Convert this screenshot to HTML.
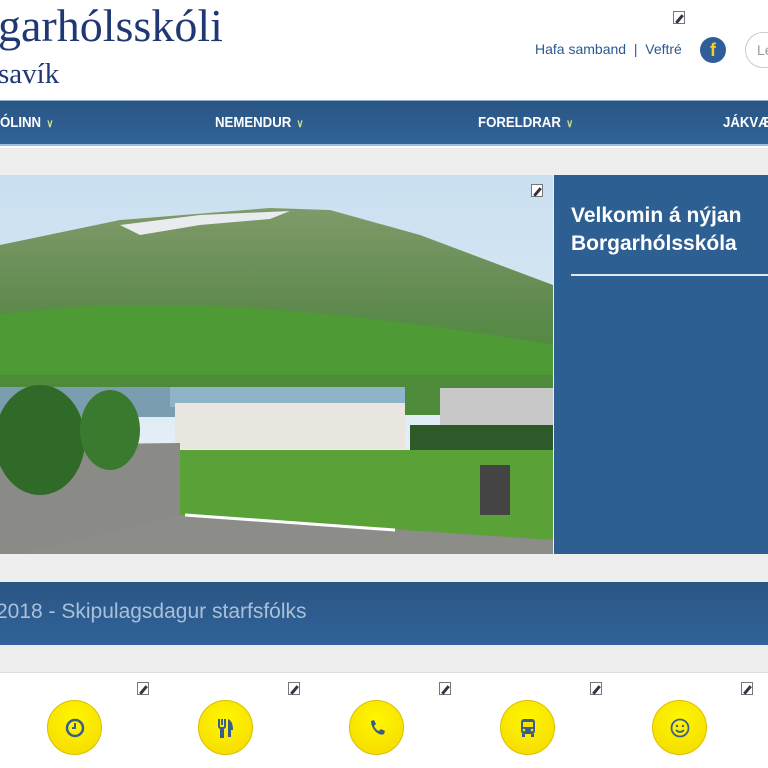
<!DOCTYPE html>
<html><head><meta charset="utf-8"><style>
*{margin:0;padding:0;box-sizing:border-box}
body{width:768px;height:768px;overflow:hidden;background:#fff;font-family:"Liberation Sans",sans-serif;position:relative}
.a{position:absolute}
.nav{top:100px;left:0;width:768px;height:46px;background:linear-gradient(#2a5583,#31639a);border-top:1px solid #8fb0d0;border-bottom:2px solid #9cc0e0}
.nav span{position:absolute;top:13px;color:#fff;font-weight:bold;font-size:15px;transform:scaleX(.88);transform-origin:left}
.nav i{font-style:normal;color:#c8e08a;font-size:11px;margin-left:6px}
.ed{width:12px;height:13px;border:1px solid #777;background:#fff}
.ed:after{content:"";position:absolute;left:4px;top:2px;width:3px;height:10px;background:#334;transform:rotate(40deg)}
.c{width:55px;height:55px;border-radius:50%;background:radial-gradient(circle at 50% 35%,#fff700,#f4d800);border:1px solid #d8c000;top:700px}
.c svg{position:absolute;left:17px;top:17px}
</style></head><body>
<div class="a" style="left:-2px;top:-1px;font-family:'Liberation Serif',serif;font-size:46px;color:#1f3874">garhólsskóli</div>
<div class="a" style="left:-2px;top:58px;font-family:'Liberation Serif',serif;font-size:29px;color:#1f3874">savík</div>
<div class="a ed" style="left:673px;top:11px"></div>
<div class="a" style="left:535px;top:41px;font-size:14px;color:#2a5a8e">Hafa samband &nbsp;| &nbsp;Veftré</div>
<div class="a" style="left:700px;top:37px;width:26px;height:26px;border-radius:50%;background:#2f5d99;color:#f0d020;font-weight:bold;font-size:18px;text-align:center;line-height:27px">f</div>
<div class="a" style="left:745px;top:32px;width:60px;height:36px;border-radius:18px;border:1px solid #ccc;color:#999;font-size:14px;padding:9px 0 0 11px">Le</div>
<div class="a nav"><span style="left:0">ÓLINN<i>∨</i></span><span style="left:215px">NEMENDUR<i>∨</i></span><span style="left:478px">FORELDRAR<i>∨</i></span><span style="left:723px">JÁKVÆ</span></div>
<div class="a" style="top:148px;left:0;width:768px;height:524px;background:#eeeeee"></div>
<svg class="a" style="left:0;top:175px" width="553" height="379" viewBox="0 0 553 379">
<defs><linearGradient id="s" x1="0" y1="0" x2="0" y2="1"><stop offset="0" stop-color="#c9dff0"/><stop offset="1" stop-color="#eef4f8"/></linearGradient>
<linearGradient id="m" x1="0" y1="0" x2="0" y2="1"><stop offset="0" stop-color="#7f9a6a"/><stop offset=".5" stop-color="#5f8a4e"/><stop offset="1" stop-color="#3f8a30"/></linearGradient></defs>
<rect width="553" height="379" fill="url(#s)"/>
<path d="M0 70 L120 45 L270 33 L330 35 L420 60 L553 110 L553 230 L0 230Z" fill="url(#m)"/>
<path d="M120 50 L200 40 L290 36 L270 44 L200 50 L140 60Z" fill="#e8ecee"/>
<path d="M0 140 Q200 110 553 170 L553 230 L0 230Z" fill="#4e9a35"/>
<rect x="0" y="200" width="553" height="40" fill="#4d8a3a"/>
<rect x="0" y="212" width="180" height="30" fill="#7a9eb0"/>
<rect x="170" y="212" width="235" height="20" fill="#8fb4c8"/>
<rect x="175" y="228" width="230" height="46" fill="#e8e6de"/>
<rect x="440" y="213" width="113" height="40" fill="#c8c8c8"/>
<rect x="410" y="250" width="143" height="25" fill="#2e5a2a"/>
<path d="M0 270 L180 268 L180 379 L0 379Z" fill="#8a8a86"/>
<path d="M180 275 L553 275 L553 379 L180 379Z" fill="#5aa238"/>
<path d="M180 340 L553 365 L553 379 L20 379Z" fill="#8c8c88"/>
<ellipse cx="40" cy="265" rx="45" ry="55" fill="#2f6a28"/>
<ellipse cx="110" cy="255" rx="30" ry="40" fill="#3a7a2e"/>
<path d="M185 340 L395 355" stroke="#fff" stroke-width="3"/>
<rect x="480" y="290" width="30" height="50" fill="#444"/>
</svg>
<div class="a ed" style="left:531px;top:184px"></div>
<div class="a" style="left:554px;top:175px;width:214px;height:379px;background:#2e5f92"></div>
<div class="a" style="left:571px;top:202px;color:#fff;font-weight:bold;font-size:21px;line-height:28px;white-space:nowrap">Velkomin á nýjan<br>Borgarhólsskóla</div>
<div class="a" style="left:571px;top:274px;width:200px;height:2px;background:#dfe8f2"></div>
<div class="a" style="left:0;top:582px;width:768px;height:63px;background:linear-gradient(#2a5583,#31639a)"></div>
<div class="a" style="left:-4px;top:600px;color:#a9c0da;font-size:21px;white-space:nowrap">2018 - Skipulagsdagur starfsfólks</div>
<div class="a" style="left:0;top:672px;width:768px;height:1px;background:#ddd"></div>
<div class="a ed" style="left:137px;top:682px"></div><div class="a ed" style="left:288px;top:682px"></div><div class="a ed" style="left:439px;top:682px"></div><div class="a ed" style="left:590px;top:682px"></div><div class="a ed" style="left:741px;top:682px"></div>
<div class="a c" style="left:47px"><svg width="20" height="20"><circle cx="10" cy="10" r="8" fill="none" stroke="#3b5d8a" stroke-width="2.5"/><path d="M10 5V10H7" stroke="#3b5d8a" stroke-width="2" fill="none"/></svg></div>
<div class="a c" style="left:198px"><svg width="20" height="20"><path d="M3 1V8Q3 10 5 10V19H7V10Q9 10 9 8V1M6 1V7" stroke="#3b5d8a" stroke-width="2" fill="none"/><path d="M12 19V1Q17 3 17 12H15V19Z" fill="#3b5d8a"/></svg></div>
<div class="a c" style="left:349px"><svg width="20" height="20"><path d="M4 3L7 2L9 6L7 8Q9 12 12 13L14 11L18 13L17 16Q14 18 9 14Q4 9 4 3Z" fill="#3b5d8a"/></svg></div>
<div class="a c" style="left:500px"><svg width="20" height="20"><rect x="3" y="1" width="14" height="15" rx="3" fill="#3b5d8a"/><rect x="5" y="4" width="10" height="5" fill="#f7e400"/><circle cx="6" cy="12" r="1.3" fill="#f7e400"/><circle cx="14" cy="12" r="1.3" fill="#f7e400"/><rect x="4" y="16" width="3" height="3" fill="#3b5d8a"/><rect x="13" y="16" width="3" height="3" fill="#3b5d8a"/></svg></div>
<div class="a c" style="left:652px"><svg width="20" height="20"><circle cx="10" cy="10" r="8.5" fill="none" stroke="#3b5d8a" stroke-width="1.8"/><circle cx="7" cy="8" r="1.2" fill="#3b5d8a"/><circle cx="13" cy="8" r="1.2" fill="#3b5d8a"/><path d="M6 12Q10 16 14 12" stroke="#3b5d8a" stroke-width="1.6" fill="none"/></svg></div>
</body></html>
